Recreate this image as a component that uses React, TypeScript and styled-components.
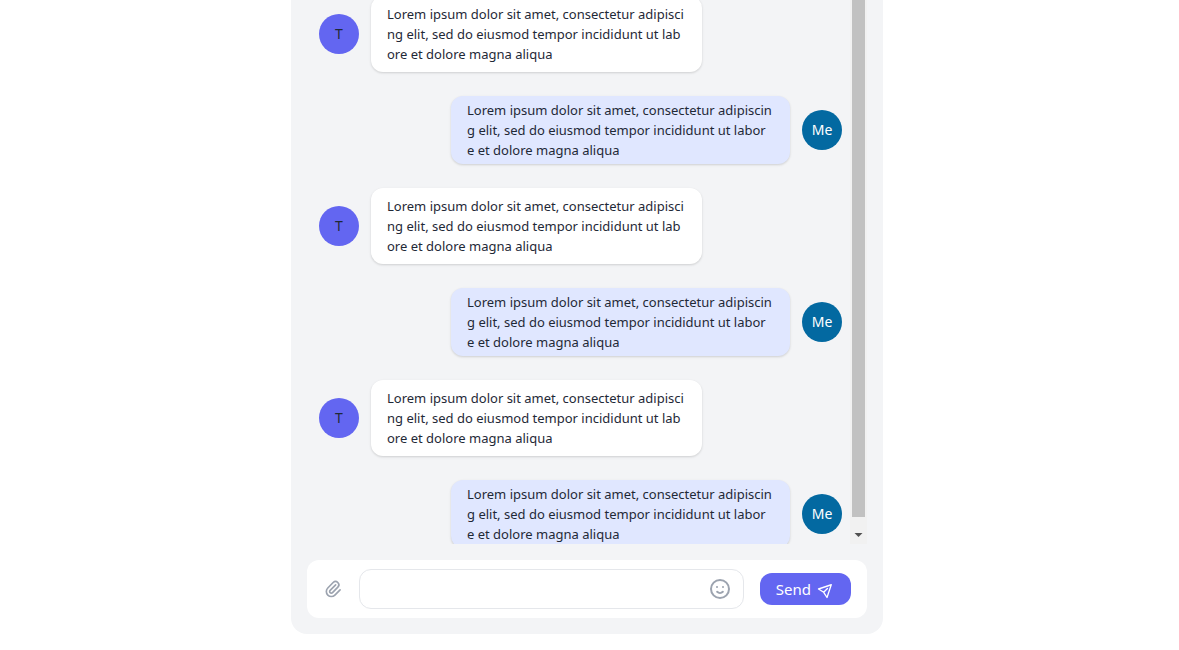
import React, { useLayoutEffect, useRef } from "react";
import styled, { createGlobalStyle } from "styled-components";

const GlobalStyle = createGlobalStyle`
  *, *::before, *::after { box-sizing: border-box; }
  body {
    margin: 0;
    background: #ffffff;
    color: #1f2937;
    font-family: "Segoe UI", "Noto Sans", "Open Sans", sans-serif;
    font-size: 16px;
    line-height: 24px;
  }
`;

const Page = styled.main`
  display: flex;
  justify-content: center;
  height: 100vh;
  padding: 0 5px 16px 0;
`;

const ChatPanel = styled.section`
  display: flex;
  flex-direction: column;
  gap: 16px;
  width: 100%;
  max-width: 592px;
  padding: 0 16px 16px;
  border-radius: 0 0 16px 16px;
  background: #f3f4f6;
`;

const History = styled.div`
  display: flex;
  flex: 1;
  min-height: 0;
`;

const MessageList = styled.ol`
  flex: 1;
  margin: 0;
  padding: 0;
  list-style: none;
  overflow-y: auto;
  scrollbar-width: none;
`;

const MessageRow = styled.li<{ $own: boolean }>`
  display: flex;
  flex-direction: ${({ $own }) => ($own ? "row-reverse" : "row")};
  align-items: center;
  gap: 12px;
  padding: 12px 8px 12px 12px;
`;

const Avatar = styled.span<{ $own: boolean }>`
  display: flex;
  flex-shrink: 0;
  align-items: center;
  justify-content: center;
  width: 40px;
  height: 40px;
  border-radius: 50%;
  background: ${({ $own }) => ($own ? "#0369a1" : "#6366f1")};
  color: ${({ $own }) => ($own ? "#ffffff" : "#1f2937")};
  font-size: 14px;
`;

const Bubble = styled.p<{ $own: boolean }>`
  width: ${({ $own }) => ($own ? "339px" : "331px")};
  margin: 0;
  padding: ${({ $own }) => ($own ? "4px 16px" : "8px 16px")};
  border-radius: 12px;
  background: ${({ $own }) => ($own ? "#e0e7ff" : "#ffffff")};
  box-shadow: 0 1px 3px rgba(0, 0, 0, 0.1), 0 1px 2px rgba(0, 0, 0, 0.06);
  font-size: 13px;
  line-height: 20px;
  white-space: pre;
`;

const ScrollTrack = styled.div`
  display: flex;
  flex-direction: column;
  width: 17px;
  padding: 0 2px;
  background: #f1f1f1;
`;

const ScrollThumb = styled.div`
  flex: 1;
  background: #c1c1c1;
`;

const ScrollArrow = styled.svg`
  display: block;
  width: 13px;
  height: 27px;
  fill: #505050;
`;

const Composer = styled.form`
  display: flex;
  align-items: center;
  gap: 16px;
  min-height: 58px;
  padding: 0 16px;
  border-radius: 12px;
  background: #ffffff;
`;

const IconButton = styled.button`
  display: flex;
  padding: 0;
  border: 0;
  background: none;
  color: #9ca3af;
  cursor: pointer;
`;

const InputBox = styled.div`
  display: flex;
  flex: 1;
  align-items: center;
  height: 40px;
  padding: 0 11px 0 15px;
  border: 1px solid #e5e7eb;
  border-radius: 12px;
`;

const TextInput = styled.input`
  flex: 1;
  min-width: 0;
  padding: 0;
  border: 0;
  outline: 0;
  background: none;
  color: inherit;
  font: inherit;
`;

const SendButton = styled.button`
  display: flex;
  align-items: center;
  gap: 8px;
  height: 32px;
  padding: 0 16px;
  border: 0;
  border-radius: 12px;
  background: #6366f1;
  color: #ffffff;
  font: inherit;
  font-size: 15px;
  cursor: pointer;
`;

const OutlineIcon = styled.svg<{ $size: number; $turn?: number }>`
  display: block;
  width: ${({ $size }) => $size}px;
  height: ${({ $size }) => $size}px;
  fill: none;
  stroke: currentColor;
  stroke-width: 2;
  stroke-linecap: round;
  stroke-linejoin: round;
  transform: rotate(${({ $turn = 0 }) => $turn}deg);
`;

const receivedText =
  "Lorem ipsum dolor sit amet, consectetur adipisci\nng elit, sed do eiusmod tempor incididunt ut lab\nore et dolore magna aliqua";
const sentText =
  "Lorem ipsum dolor sit amet, consectetur adipiscin\ng elit, sed do eiusmod tempor incididunt ut labor\ne et dolore magna aliqua";

const messages = Array.from({ length: 6 }, (_, id) => {
  const own = id % 2 === 1;
  return { id, own, text: own ? sentText : receivedText };
});

export default function App() {
  const listRef = useRef<HTMLOListElement>(null);

  useLayoutEffect(() => {
    if (listRef.current) listRef.current.scrollTop = 16;
  }, []);

  return (
    <>
      <GlobalStyle />
      <Page>
        <ChatPanel aria-label="Chat">
          <History>
            <MessageList ref={listRef}>
              {messages.map(({ id, own, text }) => (
                <MessageRow key={id} $own={own}>
                  <Avatar $own={own}>{own ? "Me" : "T"}</Avatar>
                  <Bubble $own={own}>{text}</Bubble>
                </MessageRow>
              ))}
            </MessageList>
            <ScrollTrack aria-hidden="true">
              <ScrollThumb />
              <ScrollArrow viewBox="0 0 13 27">
                <path d="M2.500 16h8l-4 4z" />
              </ScrollArrow>
            </ScrollTrack>
          </History>
          <Composer onSubmit={(event) => event.preventDefault()}>
            <IconButton type="button" aria-label="Attach file">
              <OutlineIcon viewBox="0 0 24 24" $size={20}>
                <path d="M15.172 7l-6.586 6.586a2 2 0 102.828 2.828l6.414-6.586a4 4 0 00-5.656-5.656l-6.415 6.585a6 6 0 108.486 8.486L20.5 13" />
              </OutlineIcon>
            </IconButton>
            <InputBox>
              <TextInput type="text" aria-label="Message" />
              <IconButton type="button" aria-label="Insert emoji">
                <OutlineIcon viewBox="0 0 24 24" $size={24}>
                  <path d="M14.828 14.828a4 4 0 01-5.656 0M9 10h.01M15 10h.01M21 12a9 9 0 11-18 0 9 9 0 0118 0z" />
                </OutlineIcon>
              </IconButton>
            </InputBox>
            <SendButton type="submit">
              <span>Send</span>
              <OutlineIcon viewBox="0 0 24 24" $size={16} $turn={45}>
                <path d="M12 19l9 2-9-18-9 18 9-2zm0 0v-8" />
              </OutlineIcon>
            </SendButton>
          </Composer>
        </ChatPanel>
      </Page>
    </>
  );
}
